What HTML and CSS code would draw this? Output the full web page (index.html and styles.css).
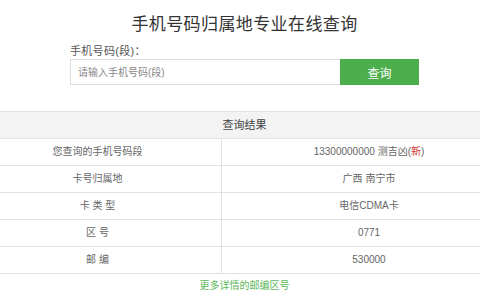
FILE: index.html
```html
<!DOCTYPE html>
<html lang="zh-CN">
<head>
  <meta charset="UTF-8" />
  <title>手机号码归属地专业在线查询</title>
  <link rel="stylesheet" href="styles.css">
</head>
<body>

  <div class="search-box">
    <h1>手机号码归属地专业在线查询</h1>
    <label for="phone">手机号码(段)：</label>
    <form class="search-form">
      <input type="text" id="phone" placeholder="请输入手机号码(段)" />
      <button type="submit">查询</button>
    </form>
  </div>

  <table class="result">
    <tr><th colspan="2">查询结果</th></tr>
    <tr><td>您查询的手机号码段</td><td>13300000000 测吉凶(<span class="new">新</span>)</td></tr>
    <tr><td>卡号归属地</td><td>广西 南宁市</td></tr>
    <tr><td>卡 类 型</td><td>电信CDMA卡</td></tr>
    <tr><td>区 号</td><td>0771</td></tr>
    <tr><td>邮 编</td><td>530000</td></tr>
  </table>

  <p class="more"><a href="#">更多详情的邮编区号</a></p>

</body>
</html>
```

FILE: styles.css
```css
body {
  margin: 0;
  background: #fff;
  color: #666;
  font-family: "Liberation Sans", "Noto Sans CJK SC", sans-serif;
  font-size: 10px;
}

.search-box {
  width: 349px;
  margin: 0 0 0 70px;
  padding: 12px 0 26px;
  box-sizing: border-box;
}

.search-box h1 {
  margin: 0 0 5px;
  text-align: center;
  font-size: 17px;
  font-weight: normal;
  color: #333;
  line-height: 26px;
  letter-spacing: 0.4px;
}

.search-box label {
  display: block;
  font-size: 11px;
  color: #555;
  line-height: 16px;
  letter-spacing: 0.3px;
}

.search-form {
  display: flex;
  height: 26px;
  margin: 0;
}

.search-form input {
  flex: 1;
  border: 1px solid #ddd;
  border-right: none;
  padding: 0 7px;
  font-size: 10px;
  font-family: inherit;
  color: #555;
  outline: none;
}

.search-form input::placeholder {
  color: #888;
}

.search-form button {
  width: 79px;
  border: none;
  background: #4cae4c;
  color: #fff;
  font-size: 12px;
  font-family: inherit;
  cursor: pointer;
}

.result {
  width: 100%;
  border-collapse: collapse;
}

.result th,
.result td {
  height: 26px;
  padding: 0;
  line-height: 16px;
  border-top: 1px solid #e2e2e2;
  border-bottom: 1px solid #e2e2e2;
  text-align: center;
  font-weight: normal;
}

.result th {
  background: #f3f3f3;
  font-size: 11px;
  color: #444;
  padding-left: 9px;
}

.result td:first-child {
  width: 195px;
  padding-right: 26px;
  border-right: 1px solid #e2e2e2;
}

.result td:last-child {
  padding-left: 36px;
}

.result .new {
  color: #c33;
}

.more {
  margin: 5px 0 0;
  padding-left: 9px;
  line-height: 14px;
  text-align: center;
  font-size: 10px;
}

.more a {
  color: #5cb85c;
  text-decoration: none;
}
```
